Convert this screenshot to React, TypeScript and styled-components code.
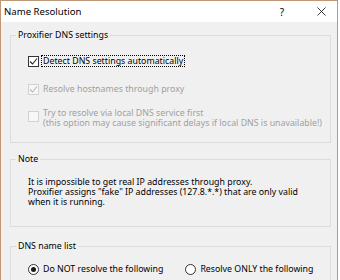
import React from "react";
import styled, { createGlobalStyle } from "styled-components";

const GlobalStyle = createGlobalStyle`
    html, body {
        margin: 0;
        padding: 0;
        background: #ffffff;
    }
    body {
        font-family: "Noto Sans", "Open Sans", sans-serif;
        color: #000000;
    }
`;

const Window = styled.div`
    width: 338px;
    height: 280px;
    box-sizing: border-box;
    border: 1px solid #bf9676;
    border-bottom: none;
    background: #f0f0f0;
    overflow: hidden;
`;

const TitleBar = styled.div`
    height: 21px;
    background: #ffffff;
    display: flex;
    align-items: center;
    padding-left: 3px;
`;

const Title = styled.div`
    font-size: 9.6px;
    color: #000;
`;

const TitleButtons = styled.div`
    margin-left: auto;
    display: flex;
    align-items: center;
`;

const TitleButton = styled.div<{ $w: number }>`
    width: ${(p) => p.$w}px;
    height: 21px;
    display: flex;
    align-items: center;
    justify-content: center;
    font-size: 10px;
`;

const Body = styled.div`
    padding: 7px 6px 0 9px;
    display: flex;
    flex-direction: column;
`;

const Group = styled.fieldset<{ $h: number; $mt?: number }>`
    margin: ${(p) => p.$mt || 0}px 0 0 0;
    border: 1px solid #dcdcdc;
    padding: 0;
    height: ${(p) => p.$h}px;
    box-sizing: border-box;
    min-width: 0;
`;

const Legend = styled.legend`
    font-size: 8.8px;
    margin-left: 5px;
    padding: 0 2px;
    line-height: 12px;
`;

const Content = styled.div<{ $pt: number }>`
    padding: ${(p) => p.$pt}px 0 0 17px;
    display: flex;
    flex-direction: column;
`;

const Option = styled.div<{ $mt?: number; $disabled?: boolean }>`
    display: flex;
    align-items: flex-start;
    gap: 2px;
    margin-top: ${(p) => p.$mt || 0}px;
    font-size: 8.8px;
    line-height: 10px;
    color: ${(p) => (p.$disabled ? "#a0a0a0" : "#000")};
`;

const Box = styled.span<{ $disabled?: boolean; $top?: number }>`
    width: 11px;
    height: 11px;
    box-sizing: border-box;
    border: 1px solid ${(p) => (p.$disabled ? "#d2d2d2" : "#333")};
    background: ${(p) => (p.$disabled ? "#f7f7f7" : "#fff")};
    margin-top: ${(p) => p.$top || 0}px;
    flex: none;
    display: flex;
    align-items: center;
    justify-content: center;
`;

const Label = styled.span<{ $focus?: boolean }>`
    padding: 0 1px;
    border: 1px dotted ${(p) => (p.$focus ? "#000" : "transparent")};
    margin-top: -1px;
`;

const Radio = styled.span`
    width: 11px;
    height: 11px;
    box-sizing: border-box;
    border-radius: 50%;
    border: 1px solid #333;
    background: #fff;
    flex: none;
    display: flex;
    align-items: center;
    justify-content: center;
`;

const Dot = styled.span`
    width: 5px;
    height: 5px;
    border-radius: 50%;
    background: #1a1a1a;
`;

const RadioRow = styled.div`
    display: flex;
    gap: 20px;
`;

const NoteText = styled.div`
    font-size: 8.8px;
    line-height: 10px;
    padding: 12px 0 0 17px;
`;

function Check({ disabled }: { disabled?: boolean }) {
    return (
        <svg width="9" height="9" viewBox="0 0 9 9">
            <path d="M1 4.5 L3.5 7 L8 1.5" fill="none" stroke={disabled ? "#b8b8b8" : "#222"} strokeWidth="1.1" />
        </svg>
    );
}

export default function App() {
    return (
        <>
            <GlobalStyle />
            <Window>
                <TitleBar>
                    <Title>Name Resolution</Title>
                    <TitleButtons>
                        <TitleButton $w={46}>?</TitleButton>
                        <TitleButton $w={32}>
                            <svg width="9" height="9" viewBox="0 0 9 9">
                                <path d="M0.5 0.5 L8.5 8.5 M8.5 0.5 L0.5 8.5" stroke="#222" strokeWidth="0.9" />
                            </svg>
                        </TitleButton>
                    </TitleButtons>
                </TitleBar>
                <Body>
                    <Group $h={114}>
                        <Legend>Proxifier DNS settings</Legend>
                        <Content $pt={15}>
                            <Option>
                                <Box><Check /></Box>
                                <Label $focus>Detect DNS settings automatically</Label>
                            </Option>
                            <Option $mt={17} $disabled>
                                <Box $disabled><Check disabled /></Box>
                                <Label>Resolve hostnames through proxy</Label>
                            </Option>
                            <Option $mt={13} $disabled>
                                <Box $disabled $top={3} />
                                <Label>
                                    Try to resolve via local DNS service first
                                    <br />
                                    (this option may cause significant delays if local DNS is unavailable!)
                                </Label>
                            </Option>
                        </Content>
                    </Group>
                    <Group $h={74} $mt={10}>
                        <Legend>Note</Legend>
                        <NoteText>
                            It is impossible to get real IP addresses through proxy.
                            <br />
                            Proxifier assigns "fake" IP addresses (127.8.*.*) that are only valid
                            <br />
                            when it is running.
                        </NoteText>
                    </Group>
                    <Group $h={60} $mt={13}>
                        <Legend>DNS name list</Legend>
                        <Content $pt={12}>
                            <RadioRow>
                                <Option>
                                    <Radio><Dot /></Radio>
                                    <Label>Do NOT resolve the following</Label>
                                </Option>
                                <Option>
                                    <Radio />
                                    <Label>Resolve ONLY the following</Label>
                                </Option>
                            </RadioRow>
                        </Content>
                    </Group>
                </Body>
            </Window>
        </>
    );
}
